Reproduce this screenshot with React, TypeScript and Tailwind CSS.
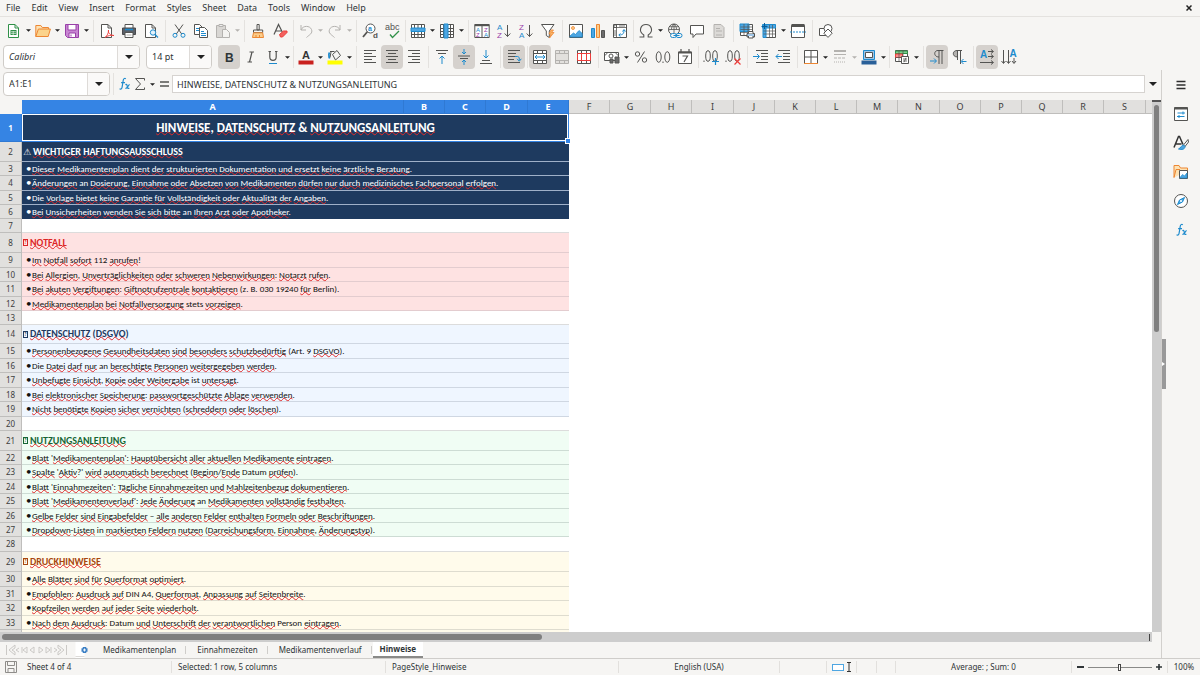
import type { ReactNode } from 'react';
import clsx from 'clsx';

const INK = '#545452';
const BLUE = '#1e8bcd';
const GREEN = '#309048';
const ORANGE = '#ed8733';
const PURPLE = '#9940a8';
const RED = '#ed3d3b';
const GREY = '#b4b2af';

function Svg({ children }: { children: ReactNode }) {
  return (
    <svg viewBox="0 0 16 16" className="h-4 w-4 overflow-visible" fill="none" stroke={INK} strokeWidth="1" aria-hidden="true">
      {children}
    </svg>
  );
}

function Letter({ x, y, size, fill, children, bold }: { x: number; y: number; size: number; fill: string; children: string; bold?: boolean }) {
  return (
    <text
      x={x}
      y={y}
      fontSize={size}
      fill={fill}
      stroke="none"
      fontWeight={bold ? 700 : 400}
      fontFamily='"Liberation Sans", sans-serif'
    >
      {children}
    </text>
  );
}

const gridLines = 'M1.5 5.5h13M1.5 8.5h13M1.5 11.5h13M4.5 1.5v13M8 1.5v13M11.5 1.5v13';

const icons: Record<string, ReactNode> = {
  new: (
    <>
      <path d="M2.5 1.5h6.5l3.5 3.5v9.5h-10z" stroke={GREEN} fill="#fff" />
      <path d="M9 1.5v3.5h3.5" stroke={GREEN} />
      <path d="M4.5 7h6v5h-6z" fill={GREEN} stroke="none" />
      <path d="M5 8.7h5M5 10.4h5M7.2 8v4" stroke="#fff" strokeWidth=".6" />
    </>
  ),
  open: (
    <>
      <path d="M.8 13.5v-11h5l1.5 2h6.2v2" stroke={ORANGE} fill="#fde2b4" />
      <path d="M.8 13.5l2.6-7.500h12l-2.200 7.500z" stroke={ORANGE} fill="#fbd38b" />
    </>
  ),
  save: (
    <>
      <path d="M1.5 1.5h13v13h-11l-2-2z" fill="#c885d2" stroke={PURPLE} />
      <path d="M4 1.5h8v5.5h-8z" fill="#fff" stroke={PURPLE} />
      <path d="M5 10h6.5v4.5h-6.5z" fill="#fff" stroke={PURPLE} />
      <path d="M7 11.5v2" stroke={PURPLE} />
    </>
  ),
  pdf: (
    <>
      <path d="M2.5 1.5h6.5l3.5 3.5v9.5h-10z" fill="#fff" />
      <path d="M9 1.5v3.5h3.5" />
      <path d="M6 14.5c2-1.5 4-5 3.5-7.5-.8 3 2 5.5 5.5 5.5-3-.5-6.500 0-9 2z" stroke={RED} fill="#fff" strokeWidth=".9" />
    </>
  ),
  print: (
    <>
      <path d="M4 5V1.5h8V5" fill="#fff" />
      <path d="M1.5 5h13v6.5h-13z" fill="#5b6068" stroke="#4a4a4d" />
      <path d="M4 6.5h8" stroke={BLUE} strokeWidth="1.5" />
      <path d="M4 9.5h8v5h-8z" fill="#fff" />
      <path d="M5.5 12h5" stroke={GREY} />
    </>
  ),
  preview: (
    <>
      <path d="M2.5 1.5h6.5l3.5 3.5v9.5h-10z" fill="#fff" />
      <path d="M9 1.5v3.5h3.5" />
      <circle cx="10" cy="9.5" r="2.7" stroke={BLUE} fill="#e4f2fb" />
      <path d="M12 11.5l3 3" stroke={BLUE} strokeWidth="1.3" />
    </>
  ),
  cut: (
    <>
      <path d="M4 1.5l6.7 9.5M12 1.5L5.3 11" />
      <circle cx="4" cy="12.3" r="2" stroke={BLUE} />
      <circle cx="12" cy="12.3" r="2" stroke={BLUE} />
    </>
  ),
  copy: (
    <>
      <path d="M1.5 1.5h5l3 3v7h-8z" fill="#fff" />
      <path d="M3 5.5h3M3 7.5h4" stroke={BLUE} />
      <path d="M6.5 4.5h5l3 3v7h-8z" fill="#fff" />
      <path d="M8 8.5h3M8 10.5h5M8 12.5h5" stroke={BLUE} />
    </>
  ),
  paste: (
    <>
      <path d="M1.5 2.5h9v12h-9z" fill="#d9d7d4" stroke={GREY} />
      <path d="M4 1.5h4v2h-4z" fill="#eee" stroke={GREY} />
      <path d="M7.5 6.5h4l3 3v5h-7z" fill="#f4f3f1" stroke={GREY} />
    </>
  ),
  brush: (
    <>
      <path d="M7 1.5h2.2v5.5h-2.2z" />
      <path d="M3.5 7h9.2v2.5h-9.2z" />
      <path d="M3.5 9.8l-1 4.700h11l-.8-4.700z" fill="#fbcd8a" stroke={ORANGE} />
      <path d="M6 12v2.5M9.5 12v2.5" stroke={ORANGE} />
    </>
  ),
  clear: (
    <>
      <path d="M2 11.5L6.5 1.5L10.3 9M3.5 8h6" strokeWidth="1.2" />
      <path d="M7.5 11.5l4-3.500h3.500v1.500l-4.500 4.500h-2z" fill="#f2625f" stroke={RED} />
    </>
  ),
  undo: <path d="M3 2v5h5M3 7c2-5 9-4.500 10.500-.5 1.500 4-2 5-5 8" stroke={GREY} />,
  redo: <path d="M13 2v5h-5M13 7c-2-5-9-4.500-10.500-.5-1.500 4 2 5 5 8" stroke={GREY} />,
  find: (
    <>
      <circle cx="8.5" cy="5.500" r="4.500" fill="#fff" />
      <path d="M5.300 8.800L1 14" strokeWidth="1.800" />
      <Letter x={6} y={8} size={7} fill={BLUE} bold>a</Letter>
      <Letter x={11} y={15} size={8} fill={INK} bold>d</Letter>
    </>
  ),
  spell: (
    <>
      <Letter x={1} y={7} size={9} fill={INK}>abc</Letter>
      <path d="M6 11.500l2.500 3 6.500-6.500" stroke={GREEN} strokeWidth="1.300" />
    </>
  ),
  rows: (
    <>
      <path d="M1.5 1.5h13v13h-13z" fill="#fff" />
      <path d={gridLines} />
      <path d="M1 5h14v3.500h-14z" fill="#4ea6e2" stroke={BLUE} />
    </>
  ),
  cols: (
    <>
      <path d="M1.5 1.5h13v13h-13z" fill="#fff" />
      <path d={gridLines} />
      <path d="M5 1h4v14h-4z" fill="#4ea6e2" stroke={BLUE} />
    </>
  ),
  sort: (
    <>
      <path d="M.8 1.500h14.400v13h-14.400z" fill="#fff" />
      <path d="M.8 2.200h14.400" strokeWidth="2" />
      <path d="M8 2v12.500" />
      <Letter x={2} y={8.500} size={6} fill={BLUE}>A</Letter>
      <Letter x={2} y={14} size={6} fill={PURPLE}>Z</Letter>
      <Letter x={10} y={8.500} size={6} fill={PURPLE}>Z</Letter>
      <Letter x={10} y={14} size={6} fill={BLUE}>A</Letter>
    </>
  ),
  az: (
    <>
      <Letter x={1} y={6.500} size={8} fill={BLUE}>A</Letter>
      <Letter x={1} y={15} size={8} fill={PURPLE}>Z</Letter>
      <path d="M11.500 2v11.500M8.700 10.500l2.800 3 2.800-3" />
    </>
  ),
  za: (
    <>
      <Letter x={1} y={6.500} size={8} fill={PURPLE}>Z</Letter>
      <Letter x={1} y={15} size={8} fill={BLUE}>A</Letter>
      <path d="M11.500 2v11.500M8.700 10.500l2.800 3 2.800-3" />
    </>
  ),
  filter: (
    <>
      <path d="M1.500 1.500h12.500l-4.700 6.500v6.500l-3-2v-4.500z" fill="#fff" />
      <path d="M11 7l-2 4h2l-1.500 4 4.500-5.500h-2.500l2-2.500z" fill="#fbb869" stroke={ORANGE} strokeWidth=".8" />
    </>
  ),
  image: (
    <>
      <path d="M1.500 1.500h13v13h-13z" fill="#fff" />
      <circle cx="5" cy="5" r="1.500" fill="#fbcd8a" stroke={ORANGE} strokeWidth=".8" />
      <path d="M2 13l3.500-3 2 1.500 3.500-4 3.200 3v3.500h-12.200z" fill="#4ea6e2" stroke={BLUE} strokeWidth=".8" />
    </>
  ),
  chart: (
    <>
      <path d="M1.500 5.500h3v9h-3z" fill="#4ea6e2" stroke={BLUE} />
      <path d="M6.500 1.500h3v13h-3z" fill="#fbcd8a" stroke={ORANGE} />
      <path d="M11.500 7.500h3v7h-3z" fill="#6b6b6b" />
    </>
  ),
  pivot: (
    <>
      <path d="M1.500 1.500h13v13h-13z" fill="#fff" />
      <path d="M1.500 4.500h13M4.500 1.500v13" strokeWidth=".8" />
      <path d="M2 2h2.500v2.500h-2.500zM7 3h6M3 7v6" strokeWidth=".8" />
      <path d="M7 12c4.500 0 5-2 5-5M10.500 8.500L12 6.500l1.500 2M8.500 10.500L6.800 12l1.700 1.700" stroke={BLUE} />
    </>
  ),
  omega: <path d="M1.500 14h4.300v-2c-6-4-3-10.500 2.200-10.500s8.200 6.500 2.200 10.500v2h4.300" strokeWidth="1.100" />,
  link: (
    <>
      <circle cx="7" cy="6.500" r="5.500" />
      <path d="M1.500 6.500h11M7 1v11M2.500 3.700h9M4.500 6.500c0-2 .7-4 2.500-5.500 1.800 1.500 2.500 3.500 2.500 5.500" strokeWidth=".8" />
      <rect x="3.500" y="10.500" width="6" height="4" rx="2" stroke={BLUE} fill="#f6f5f3" />
      <rect x="9" y="10.500" width="6" height="4" rx="2" stroke={BLUE} fill="#f6f5f3" />
      <path d="M6.500 12.500h6" stroke={BLUE} />
    </>
  ),
  comment: <path d="M1.500 2.500h13v8.500h-7.500l-3 3.500v-3.500h-2.500z" fill="#fff" />,
  header: (
    <>
      <path d="M3 1.500h7l3 3v10h-10z" fill="#dcdad7" stroke={GREY} />
      <path d="M5 5.500h4M5 8h6M5 12h6" stroke={GREY} />
    </>
  ),
  area: (
    <>
      <path d="M1.500 1.500h12v11h-12z" fill="#fff" />
      <path d="M1 1h9v7.500h-9z" fill="#4ea6e2" stroke={BLUE} />
      <path d="M1.500 4h12M1.500 6.500h12M1.500 9.500h12M5 1v12M9 1v12" strokeWidth=".7" />
      <path d="M8 10.500h7.500v3.500h-7.500z" fill="#9fc6e8" />
      <path d="M9.500 10.500v-2h4.500v2M9.500 13v2h4.500v-2" fill="#fff" />
    </>
  ),
  freeze: (
    <>
      <path d="M2.500 2.500h12v12h-12z" fill="#fff" />
      <path d="M1.500 1.500h13v3.500h-13zM2 2h3v12.500h-3z" fill="#4ea6e2" stroke={BLUE} />
      <path d="M2.500 8h12M2.500 11h12M8.500 2v12.500M11.500 2v12.500" strokeWidth=".7" />
      <path d="M3.500 0v6M.5 3.500h6" stroke="#0b5c96" />
    </>
  ),
  split: (
    <>
      <path d="M1.500 2.500h13v12h-13z" fill="#fff" />
      <path d="M1.500 2.500h13" strokeWidth="3" />
      <path d="M0 9h16" stroke={BLUE} strokeDasharray="2 1" />
    </>
  ),
  shapes: (
    <>
      <path d="M1.500 5.500h8v7h-8z" fill="#fff" />
      <circle cx="10" cy="5.500" r="4" fill="#fff" />
      <path d="M10 6l4.200 4.200-4.200 4.200-4.200-4.200z" fill="#fff" />
    </>
  ),
  bold: <Letter x={4} y={12.500} size={12} fill="#2e3436" bold>B</Letter>,
  italic: <path d="M6.500 3h4.500M4.500 13h4.500M9 3l-2.500 10" strokeWidth="1.200" />,
  underline: (
    <>
      <path d="M3.500 2.500h2.500M10 2.500h2.500M4.800 2.500v5.500c0 4.500 6.400 4.500 6.400 0v-5.500" strokeWidth="1.200" />
      <path d="M4 14.500h8" stroke={BLUE} />
    </>
  ),
  fontcolor: (
    <>
      <Letter x={4} y={9.500} size={11} fill="#333" bold>A</Letter>
      <path d="M.5 13.500h15" stroke="#c9211e" strokeWidth="4" />
    </>
  ),
  fill: (
    <>
      <path d="M4 3l-1 5.500M3 2.500h4.500M5.500 5.500l4.500-4 3.500 5-5 4.500z" fill="#f6f5f3" />
      <path d="M2.500 3.500c-1.500 2 0 4-.3 6" stroke={BLUE} strokeWidth="1.800" />
      <path d="M.5 13.500h15" stroke="#ffff00" strokeWidth="4" />
    </>
  ),
  left: <path d="M2 1.500h12M2 4.500h8M2 7.500h12M2 10.500h8M2 13.500h12" />,
  center: <path d="M2 1.500h12M4 4.500h8M2 7.500h12M4 10.500h8M2 13.500h12" />,
  right: <path d="M2 1.500h12M6 4.500h8M2 7.500h12M6 10.500h8M2 13.500h12" />,
  top: (
    <>
      <path d="M2 1.500h12M4 4.500h8" />
      <path d="M8 15V7M5.500 9.500L8 7l2.500 2.500" stroke={BLUE} />
    </>
  ),
  middle: (
    <>
      <path d="M2 7h12M4 9.500h8" />
      <path d="M8 0v5M6 3l2 2 2-2M8 16v-5M6 13l2-2 2 2" stroke={BLUE} />
    </>
  ),
  bottom: (
    <>
      <path d="M4 11.500h8M2 14.500h12" />
      <path d="M8 1v8M5.500 6.500L8 9l2.500-2.500" stroke={BLUE} />
    </>
  ),
  wrap: (
    <>
      <path d="M2 1.500h12M2 4.500h8M2 7.500h7M2 10.500h6M2 13.500h12" />
      <path d="M9 7.500h2.500c2 0 1.800 2 1.800 4M11 9.800l2.300 2.400 2-2.400" stroke={BLUE} />
    </>
  ),
  merge: (
    <>
      <path d="M1.500 1.500h13v13h-13z" fill="#fff" />
      <path d="M1.500 4.500h13M1.500 11.500h13M5.500 1.500v3M10.500 1.500v3M5.500 11.500v3M10.500 11.500v3" />
      <path d="M3 8h10M5 6L3 8l2 2M11 6l2 2-2 2" stroke={BLUE} />
    </>
  ),
  mergecells: (
    <>
      <path d="M1.500 1.500h13v13h-13z" fill="#e2e0dd" stroke={GREY} />
      <path d="M1.500 4.500h13M1.500 11.500h13M5.500 1.500v3M10.500 1.500v3M5.500 11.500v3M10.500 11.500v3" stroke={GREY} />
    </>
  ),
  unmerge: (
    <>
      <path d="M1.500 1.500h13v13h-13z" fill="#fff" />
      <path d="M5.500 1.500v3M10.500 1.500v3M5.500 11.500v3M10.500 11.500v3" />
      <path d="M1.500 4.500h13v7h-13zM5.500 4.500v7M10.500 4.500v7" stroke={RED} />
    </>
  ),
  currency: (
    <>
      <path d="M.5 3.500h14v8h-14z" fill="#fff" />
      <circle cx="7" cy="7" r="2" />
      <path d="M3 3.500c0 1.500-1 2.500-2.500 2.500M12 3.500c0 1.500 1 2.500 2.500 2.500" />
      <path d="M6 10h3v4h-3zM11 8h4v6h-4z" fill="#6b6b6b" />
    </>
  ),
  percent: (
    <>
      <circle cx="4.500" cy="5" r="2.200" />
      <circle cx="11.500" cy="11" r="2.200" />
      <path d="M11.500 2.500l-7 11" />
    </>
  ),
  number: (
    <>
      <ellipse cx="3.700" cy="8" rx="2.500" ry="5.300" />
      <ellipse cx="12.300" cy="8" rx="2.500" ry="5.300" />
      <path d="M8 12.500v1.500" />
    </>
  ),
  date: (
    <>
      <path d="M1.500 3h13v11.500h-13z" fill="#fff" />
      <path d="M1.500 3.500h13" strokeWidth="2" />
      <path d="M4 0v3M12 0v3M5.500 7h5l-3.500 6" strokeWidth="1.200" />
    </>
  ),
  adddec: (
    <>
      <ellipse cx="5" cy="7" rx="2.300" ry="5.300" />
      <ellipse cx="12" cy="7" rx="2.300" ry="5.300" />
      <path d="M1 11.500v1.500" />
      <path d="M12.500 9v7M9 12.500h7" stroke={BLUE} strokeWidth="1.200" />
    </>
  ),
  deldec: (
    <>
      <ellipse cx="5" cy="7" rx="2.300" ry="5.300" />
      <ellipse cx="12" cy="7" rx="2.300" ry="5.300" />
      <path d="M1 11.500v1.500" />
      <path d="M9.500 9.500l6 6M15.500 9.500l-6 6" stroke={RED} strokeWidth="1.200" />
    </>
  ),
  indent: (
    <>
      <path d="M3 1.500h12M8 4.500h7M8 7.500h7M8 10.500h7M3 13.500h12" />
      <path d="M0 7.500h6M4 5l2.500 2.500L4 10" stroke={BLUE} />
    </>
  ),
  outdent: (
    <>
      <path d="M3 1.500h12M8 4.500h7M8 7.500h7M8 10.500h7M3 13.500h12" />
      <path d="M1 7.500h6M3.500 5L1 7.500 3.500 10" stroke={BLUE} />
    </>
  ),
  borders: (
    <>
      <path d="M1.500 1.500h13v13h-13zM8 1.500v13M1.500 8h13" fill="#fff" />
      <path d="M1 14.500h14" stroke={ORANGE} />
    </>
  ),
  linestyle: (
    <>
      <path d="M2 2h12" strokeWidth="2" stroke={GREY} />
      <path d="M2 5.500h12" stroke={GREY} />
      <path d="M2 9h12" stroke={GREY} strokeDasharray="3 1" />
      <path d="M2 13h12" stroke={GREY} strokeDasharray="1 1" />
    </>
  ),
  bordercolor: (
    <>
      <path d="M2.500 1.500h11v9h-11z" fill="#9fc6e8" stroke={BLUE} />
      <path d="M4.500 3.500h7v5h-7z" fill="#fff" />
      <path d="M.5 13.500h15" stroke="#2a6099" strokeWidth="4" />
    </>
  ),
  conditional: (
    <>
      <path d="M1.500 1.500h12v11h-12z" fill="#fff" />
      <path d="M1.500 2h12v2.500h-12z" fill="#7ccf8e" stroke={GREEN} />
      <path d="M1.500 5h7v3.500h-7z" fill="#f58c8a" stroke={RED} />
      <path d="M5 1.500v11M9 1.500v11M1.500 8.500h8" strokeWidth=".7" />
      <path d="M7.500 7.500h7v7h-7z" fill="#fff" />
      <path d="M9 10h4M9 12h4M12 8.800l-2 4.400" strokeWidth=".8" />
    </>
  ),
  ltr: (
    <>
      <path d="M10 1v14M13 1v14M14.500 1.500H9c-4.500 0-4.500 6.500 1 6.500" />
      <path d="M1 12h6M5 9.500l2.500 2.500L5 14.500" stroke={BLUE} />
    </>
  ),
  rtl: (
    <>
      <path d="M6.500 1.500H6c-5 0-5 6.500.5 6.500z" fill="#b4b2af" />
      <path d="M6.500 1v10M9.500 1v14M11 1.500H6" />
      <path d="M15.500 12.500h-5M12.500 10L10 12.500l2.500 2.500" stroke={BLUE} />
    </>
  ),
  texth: (
    <>
      <Letter x={1} y={9} size={10} fill={BLUE} bold>A</Letter>
      <path d="M9 2.500h5M9 7.500h5M1 13.500h13M12 .5l2.500 2-2.500 2M12 5.500l2.500 2-2.500 2M12 11.500l2.500 2-2.500 2" />
    </>
  ),
  textv: (
    <>
      <Letter x={8.500} y={8} size={10} fill={BLUE} bold>A</Letter>
      <path d="M2.500 1v13M7.500 1v13M13 9v5M.5 12l2 2.500 2-2.500M5.500 12l2 2.500 2-2.500M11 12l2 2.500 2-2.500" />
    </>
  ),
  fx: (
    <g transform="translate(2 2) scale(.78)">
      <path d="M10 1c-1.500-1.200-3 0-3.300 2l-1.500 9c-.4 2-1.700 2.700-3.200 1.700M4 6h5" stroke={BLUE} strokeWidth="1.500" />
      <path d="M9.500 8.500c1.500-.8 2 0 2.200 1.500l.4 2c.3 1.500 1.200 1.700 2.400.8M15 8.500c-2 0-2.800 5.300-5.500 4.800" stroke={BLUE} strokeWidth="1.500" />
    </g>
  ),
  sum: <path d="M12.500 4.500V2.500H3.500L8.500 8l-5 5.500h9V11.500" />,
  equals: <path d="M4 6h9M4 10h9" strokeWidth="1.600" />,
  hamburger: <path d="M3.500 4.500h9M3.500 8h9M3.500 11.500h9" stroke="#2e2e2e" strokeWidth="1.300" />,
  properties: (
    <>
      <path d="M1.500 1.500h13v13h-13z" fill="#fff" />
      <path d="M1.500 2.500h13" strokeWidth="2" />
      <path d="M4.500 7h7.500M4 10.500h7.500M10 5.500v3M6 9v3" stroke={BLUE} />
    </>
  ),
  styles: (
    <>
      <path d="M1 12.500L5.500 1.500h1L10 9.500M3 9h5.500" strokeWidth="1.500" stroke="#333" />
      <path d="M15 4.500l-4.500 5.500 1.500 1.500L15.500 7z" fill="#fff" />
      <path d="M10.500 10c-2 0-2.500 3-5 4 3 1 6.500.5 6.500-2.500z" fill="#4ea6e2" stroke={BLUE} />
    </>
  ),
  gallery: (
    <>
      <path d="M1 13.500v-12h5l1.500 2.500h7v3M1 13.500l2-8h4" stroke={ORANGE} fill="#fde2b4" />
      <path d="M6.500 6.500h8v8h-8z" fill="#fff" />
      <path d="M7 13.500l2.500-3 2 1.500 2.500-3v5h-7z" fill="#4ea6e2" stroke={BLUE} strokeWidth=".7" />
    </>
  ),
  navigator: (
    <>
      <circle cx="8" cy="8" r="6.500" fill="#fff" />
      <path d="M11.500 4.500l-2 4.500-5 2.500 2-4.500z" fill="#4ea6e2" stroke={BLUE} />
      <circle cx="8" cy="8" r="1" fill="#fff" stroke="none" />
    </>
  ),
  disk: (
    <>
      <path d="M2.500 2.500h11v11h-11z" stroke="#8f8d8a" />
      <path d="M4.500 2.500h7v4h-7zM5 9.500h6v4h-6z" stroke="#8f8d8a" />
    </>
  ),
  addsheet: (
    <>
      <path d="M1.500 0h8l1 2v14h-9z" fill="#fff" stroke="none" />
      <path d="M1.500 14.500h9" stroke="#dddbd8" />
      <path d="M10.500 5v6M7.500 8h6" stroke="#3b7fc4" strokeWidth="3.500" />
      <path d="M10.500 6.500v3M9 8h3" stroke="#fff" strokeWidth=".9" />
    </>
  ),
};

type Tool = { icon: string; label: string; menu?: boolean; on?: boolean; off?: boolean };
type Item = Tool | 'gap' | 'wide';

const standardBar: Item[] = [
  { icon: 'new', label: 'New', menu: true },
  { icon: 'open', label: 'Open', menu: true },
  { icon: 'save', label: 'Save', menu: true },
  'wide',
  { icon: 'pdf', label: 'Export as PDF' },
  { icon: 'print', label: 'Print' },
  { icon: 'preview', label: 'Print Preview' },
  'wide',
  { icon: 'cut', label: 'Cut' },
  { icon: 'copy', label: 'Copy' },
  { icon: 'paste', label: 'Paste', menu: true, off: true },
  'wide',
  { icon: 'brush', label: 'Clone Formatting' },
  { icon: 'clear', label: 'Clear Formatting' },
  'gap',
  { icon: 'undo', label: 'Undo', menu: true, off: true },
  { icon: 'redo', label: 'Redo', menu: true, off: true },
  'wide',
  { icon: 'find', label: 'Find and Replace' },
  { icon: 'spell', label: 'Spelling' },
  'gap',
  { icon: 'rows', label: 'Row', menu: true },
  { icon: 'cols', label: 'Column', menu: true },
  'wide',
  { icon: 'sort', label: 'Sort' },
  { icon: 'az', label: 'Sort Ascending' },
  { icon: 'za', label: 'Sort Descending' },
  { icon: 'filter', label: 'AutoFilter' },
  'wide',
  { icon: 'image', label: 'Insert Image' },
  { icon: 'chart', label: 'Insert Chart' },
  { icon: 'pivot', label: 'Insert Pivot Table' },
  'gap',
  { icon: 'omega', label: 'Special Character', menu: true },
  { icon: 'link', label: 'Insert Hyperlink' },
  { icon: 'comment', label: 'Insert Comment' },
  { icon: 'header', label: 'Headers and Footers', off: true },
  'wide',
  { icon: 'area', label: 'Define Print Area' },
  { icon: 'freeze', label: 'Freeze Rows and Columns', menu: true },
  { icon: 'split', label: 'Split Window' },
  'wide',
  { icon: 'shapes', label: 'Show Draw Functions' },
];

const formatBar: Item[] = [
  { icon: 'bold', label: 'Bold', on: true },
  { icon: 'italic', label: 'Italic' },
  { icon: 'underline', label: 'Underline', menu: true },
  'gap',
  { icon: 'fontcolor', label: 'Font Color', menu: true },
  { icon: 'fill', label: 'Background Color', menu: true },
  'wide',
  { icon: 'left', label: 'Align Left' },
  { icon: 'center', label: 'Center Horizontally', on: true },
  { icon: 'right', label: 'Align Right' },
  'wide',
  { icon: 'top', label: 'Align Top' },
  { icon: 'middle', label: 'Center Vertically', on: true },
  { icon: 'bottom', label: 'Align Bottom' },
  'wide',
  { icon: 'wrap', label: 'Wrap Text', on: true },
  'gap',
  { icon: 'merge', label: 'Merge and Center', on: true },
  { icon: 'mergecells', label: 'Merge Cells', off: true },
  { icon: 'unmerge', label: 'Unmerge Cells' },
  'wide',
  { icon: 'currency', label: 'Format as Currency', menu: true },
  { icon: 'percent', label: 'Format as Percent' },
  { icon: 'number', label: 'Format as Number' },
  { icon: 'date', label: 'Format as Date' },
  'gap',
  { icon: 'adddec', label: 'Add Decimal Place' },
  { icon: 'deldec', label: 'Delete Decimal Place' },
  'wide',
  { icon: 'indent', label: 'Increase Indent' },
  { icon: 'outdent', label: 'Decrease Indent' },
  'wide',
  { icon: 'borders', label: 'Borders', menu: true },
  { icon: 'linestyle', label: 'Border Style', menu: true, off: true },
  { icon: 'bordercolor', label: 'Border Color', menu: true },
  'gap',
  { icon: 'conditional', label: 'Conditional', menu: true },
  'wide',
  { icon: 'ltr', label: 'Left-To-Right', on: true },
  { icon: 'rtl', label: 'Right-To-Left' },
  'wide',
  { icon: 'texth', label: 'Text direction from left to right', on: true },
  { icon: 'textv', label: 'Text direction from top to bottom' },
];

const menus = ['File', 'Edit', 'View', 'Insert', 'Format', 'Styles', 'Sheet', 'Data', 'Tools', 'Window', 'Help'];

function Caret({ big, off }: { big?: boolean; off?: boolean }) {
  return (
    <svg viewBox="0 0 8 4" className={clsx('shrink-0', big ? 'h-1 w-2' : 'h-[3px] w-[5px]')} aria-hidden="true">
      <path d="M0 0h8L4 4z" fill={off ? '#b4b2af' : '#222'} />
    </svg>
  );
}

function ToolItem({ item }: { item: Item }) {
  if (typeof item === 'string') {
    return (
      <span className={clsx('flex h-[22px] shrink-0 justify-center', item === 'wide' ? 'w-[6px]' : 'w-1')}>
        <span className="w-px bg-[#e4e2df]" />
      </span>
    );
  }
  return (
    <>
      <button
        aria-label={item.label}
        disabled={item.off}
        className={clsx('flex h-6 w-[22px] shrink-0 items-center justify-center rounded', item.on && 'bg-[#d5d1cd]')}
      >
        <Svg>{icons[item.icon]}</Svg>
      </button>
      {item.menu && (
        <button aria-label={`${item.label} options`} className="flex h-6 w-[7px] shrink-0 items-center justify-center">
          <Caret off={item.off} />
        </button>
      )}
    </>
  );
}

function Combo({ label, value, className }: { label: string; value: string; className: string }) {
  return (
    <div className={clsx('flex h-6 shrink-0 overflow-hidden rounded border border-[#cfccc8] bg-white', className)}>
      <input
        aria-label={label}
        defaultValue={value}
        className={clsx('w-0 min-w-0 flex-1 bg-transparent px-[5px] outline-none', label === 'Font Name' && 'italic')}
      />
      <button aria-label={`${label} list`} className="flex w-[22px] items-center justify-center border-l border-[#dedbd8] bg-[#faf9f8]">
        <Caret big />
      </button>
    </div>
  );
}

const extraColumns = 'BCDEFGHIJKLMNOPQRS'.split('');

type Tone = 'navy' | 'red' | 'blue' | 'green' | 'yellow' | 'blank';
type Row = { text?: string; tone: Tone; kind: 'title' | 'heading' | 'line' };

const block = (tone: Tone, heading: string, lines: string[], after: Tone = 'blank'): Row[] => [
  { text: heading, tone, kind: 'heading' },
  ...lines.map((text): Row => ({ text, tone, kind: 'line' })),
  { tone: after, kind: 'line' },
];

const rows: Row[] = [
  { text: 'HINWEISE, DATENSCHUTZ & NUTZUNGSANLEITUNG', tone: 'navy', kind: 'title' },
  ...block('navy', 'WICHTIGER HAFTUNGSAUSSCHLUSS', [
    'Dieser Medikamentenplan dient der strukturierten Dokumentation und ersetzt keine ärztliche Beratung.',
    'Änderungen an Dosierung, Einnahme oder Absetzen von Medikamenten dürfen nur durch medizinisches Fachpersonal erfolgen.',
    'Die Vorlage bietet keine Garantie für Vollständigkeit oder Aktualität der Angaben.',
    'Bei Unsicherheiten wenden Sie sich bitte an Ihren Arzt oder Apotheker.',
  ]),
  ...block('red', 'NOTFALL', [
    'Im Notfall sofort 112 anrufen!',
    'Bei Allergien, Unverträglichkeiten oder schweren Nebenwirkungen: Notarzt rufen.',
    'Bei akuten Vergiftungen: Giftnotrufzentrale kontaktieren (z. B. 030 19240 für Berlin).',
    'Medikamentenplan bei Notfallversorgung stets vorzeigen.',
  ]),
  ...block('blue', 'DATENSCHUTZ (DSGVO)', [
    'Personenbezogene Gesundheitsdaten sind besonders schutzbedürftig (Art. 9 DSGVO).',
    'Die Datei darf nur an berechtigte Personen weitergegeben werden.',
    'Unbefugte Einsicht, Kopie oder Weitergabe ist untersagt.',
    'Bei elektronischer Speicherung: passwortgeschützte Ablage verwenden.',
    'Nicht benötigte Kopien sicher vernichten (schreddern oder löschen).',
  ]),
  ...block('green', 'NUTZUNGSANLEITUNG', [
    "Blatt 'Medikamentenplan': Hauptübersicht aller aktuellen Medikamente eintragen.",
    "Spalte 'Aktiv?' wird automatisch berechnet (Beginn/Ende Datum prüfen).",
    "Blatt 'Einnahmezeiten': Tägliche Einnahmezeiten und Mahlzeitenbezug dokumentieren.",
    "Blatt 'Medikamentenverlauf': Jede Änderung an Medikamenten vollständig festhalten.",
    'Gelbe Felder sind Eingabefelder – alle anderen Felder enthalten Formeln oder Beschriftungen.',
    'Dropdown-Listen in markierten Feldern nutzen (Darreichungsform, Einnahme, Änderungstyp).',
  ]),
  ...block(
    'yellow',
    'DRUCKHINWEISE',
    [
      'Alle Blätter sind für Querformat optimiert.',
      'Empfohlen: Ausdruck auf DIN A4, Querformat, Anpassung auf Seitenbreite.',
      'Kopfzeilen werden auf jeder Seite wiederholt.',
      'Nach dem Ausdruck: Datum und Unterschrift der verantwortlichen Person eintragen.',
    ],
    'yellow',
  ),
];

const tallRows = new Set([4, 9, 11, 15, 17, 19, 23, 25, 28, 30, 32]);

const toneStyles: Record<Tone, string> = {
  navy: 'border-[#9fb0c8] bg-[#1e3a5f] text-white',
  red: 'border-[#e3cccf] bg-[#fee2e2]',
  blue: 'border-[#cfd7e2] bg-[#eff6ff]',
  green: 'border-[#cddcd4] bg-[#f0fdf4]',
  yellow: 'border-[#dedccf] bg-[#fffbeb]',
  blank: 'border-[#dcdcdc] bg-white',
};

const headingColor: Record<Tone, string> = {
  navy: 'text-white',
  red: 'text-[#dc2626]',
  blue: 'text-[#1e3a5f]',
  green: 'text-[#166534]',
  yellow: 'text-[#a8470f]',
  blank: '',
};

const knownWords = new Set(['Die', 'an', 'in', 'Person', 'Datum', 'Art', 'Berlin', 'stets', 'DIN', 'A', 'B', 'z', 'ist']);

function SpellChecked({ text }: { text: string }) {
  return (
    <>
      {text.split(/(\p{L}+)/u).map((part, i) =>
        i % 2 === 1 && !knownWords.has(part) ? (
          <span key={i} className="underline decoration-[#e02a2a] decoration-wavy decoration-1 underline-offset-[-1px] [text-decoration-skip-ink:none]">
            {part}
          </span>
        ) : (
          part
        ),
      )}
    </>
  );
}

function CellContent({ row }: { row: Row }) {
  if (!row.text) return null;
  if (row.kind === 'title') {
    return (
      <div className="text-center text-[13px] leading-4 font-bold">
        <SpellChecked text={row.text} />
      </div>
    );
  }
  if (row.kind === 'heading') {
    return (
      <div className={clsx('flex items-center gap-[2px] pl-px text-[10px] leading-3 font-bold', headingColor[row.tone])}>
        {row.tone === 'navy' ? (
          <span className="font-['DejaVu_Sans'] text-[9px] font-normal">⚠</span>
        ) : (
          <span className="flex h-[7px] w-[5px] items-center justify-center border border-current text-[5px] leading-none">?</span>
        )}
        <span>
          <SpellChecked text={row.text} />
        </span>
      </div>
    );
  }
  return (
    <div className="flex pl-1 text-[9px] leading-3">
      <span className="w-[6px] text-[11px]">•</span>
      <span>
        <SpellChecked text={row.text} />
      </span>
    </div>
  );
}

function rowHeight(row: Row, n: number) {
  if (row.kind === 'title') return 'h-7';
  if (row.kind === 'heading') return n === 14 ? 'h-[19px]' : 'h-5';
  return tallRows.has(n) ? 'h-[15px]' : 'h-[14px]';
}

function Sheet() {
  return (
    <table className="w-full table-fixed border-separate border-spacing-0">
      <colgroup>
        <col className="w-[22px]" />
        <col className="w-[382px]" />
        {extraColumns.map((c, i) => (
          <col key={c} className={i % 5 === 2 ? 'w-[42px]' : 'w-[41px]'} />
        ))}
        <col />
      </colgroup>
      <thead>
        <tr className="h-[14px] text-[9px] leading-3">
          <td className="bg-[#f6f5f3] p-0" />
          {['A', ...extraColumns].map((c, i) => (
            <th
              key={c}
              scope="col"
              className={clsx(
                'border-r border-b p-0',
                i < 5 ? 'border-[#2f79d3] bg-[#3584e4] font-bold text-white' : 'border-[#bfbebc] bg-[#e1e0de] font-normal text-[#3d3d3d]',
              )}
            >
              {c}
            </th>
          ))}
          <td className="border-b border-[#bfbebc] bg-[#e1e0de] p-0" />
        </tr>
      </thead>
      <tbody className="font-[Carlito,Lato,sans-serif] text-[#111]">
        {rows.map((row, i) => {
          const n = i + 1;
          return (
            <tr key={n} className={rowHeight(row, n)}>
              <th
                scope="row"
                className={clsx(
                  "border-r border-b p-0 font-['Noto_Sans'] text-[8px] leading-3",
                  n === 1 ? 'border-[#2f79d3] bg-[#3584e4] font-bold text-white' : 'border-[#bfbebc] bg-[#e1e0de] font-normal text-[#3d3d3d]',
                )}
              >
                {n <= 33 ? n : ''}
              </th>
              <td
                colSpan={5}
                className={clsx(
                  'p-0 whitespace-nowrap',
                  toneStyles[row.tone],
                  n !== 1 && n !== 6 && 'border-b',
                  n === 1 && 'relative z-10',
                )}
              >
                <CellContent row={row} />
                {n === 1 && (
                  <span className="absolute inset-0 border-r border-b border-[#3584e4]">
                    <span className="absolute inset-0 border border-white" />
                    <span className="absolute -right-[2px] -bottom-[2px] h-1 w-1 bg-[#3584e4] outline outline-white" />
                  </span>
                )}
              </td>
              <td colSpan={extraColumns.length - 3} className="bg-white p-0" />
            </tr>
          );
        })}
      </tbody>
    </table>
  );
}

const sheetTabs = ['Medikamentenplan', 'Einnahmezeiten', 'Medikamentenverlauf', 'Hinweise'];

function SheetTabs() {
  return (
    <div className="flex h-4 shrink-0 items-stretch text-[8px]">
      <div className="flex w-[68px] items-center gap-px pl-[5px]">
        {['First sheet', 'Previous sheet', 'Next sheet', 'Last sheet'].map((label, i) => (
          <button key={label} aria-label={label} className="w-[15px]">
            <svg viewBox="0 0 15 12" className="h-3 w-full" fill="none" stroke="#cbc9c6" aria-hidden="true">
              {i === 0 && <path d="M1.500 1v10M10 1L4 6l6 5V8l-3-2 3-2zM14 4l-3 2 3 2" />}
              {i === 1 && <path d="M6 3v6L2 6zM13 3v6L9 6zM1 3v6" />}
              {i === 2 && <path d="M2 3v6l4-3zM9 3v6l4-3zM14 3v6" />}
              {i === 3 && <path d="M13.500 1v10M5 1l6 5-6 5V8l3-2-3-2zM1 4l3 2-3 2" />}
            </svg>
          </button>
        ))}
      </div>
      <button aria-label="Add sheet" className="flex w-[25px] items-center pl-[6px]">
        <Svg>{icons.addsheet}</Svg>
      </button>
      <div role="tablist" className="flex">
        {sheetTabs.map((t, i) => (
          <button
            key={t}
            role="tab"
            aria-selected={i === 3}
            className={clsx(
              'relative leading-3',
              i === 3 ? 'border-b-2 border-[#8a8a88] bg-white px-[7px] font-bold' : 'border-r border-[#f6f5f3] px-[10px]',
            )}
          >
            {t}
            {i < 3 && <span className="absolute top-1 right-0 h-2 w-px bg-[#cfcdca]" />}
          </button>
        ))}
      </div>
    </div>
  );
}

function StatusBar() {
  const cell = 'flex h-3 items-center border-l border-[#e2e0dd]';
  return (
    <footer className="grid h-[17px] shrink-0 grid-cols-[22px_149fr_214fr_233fr_161fr_47fr_30fr_20fr_19fr_176fr_96px_33px] items-center border-t border-[#cfcdca] text-[8px]">
      <span className="flex justify-center">
        <Svg>{icons.disk}</Svg>
      </span>
      <span className="pl-[5px]">Sheet 4 of 4</span>
      <span className={clsx(cell, 'pl-[6px]')}>Selected: 1 row, 5 columns</span>
      <span className={clsx(cell, 'pl-[6px]')}>PageStyle_Hinweise</span>
      <span className={clsx(cell, 'justify-center')}>English (USA)</span>
      <span className={cell} />
      <span className={clsx(cell, 'gap-[2px] pl-[5px]')}>
        <span className="h-[7px] w-3 border border-[#4ea6e2] bg-white" />
        <svg viewBox="0 0 6 12" className="h-3 w-[6px]" fill="none" stroke="#333" aria-hidden="true">
          <path d="M1 1.500h4M3 1.500v9M1 10.500h4" />
        </svg>
      </span>
      <span className={cell} />
      <span className={cell} />
      <span className={clsx(cell, 'justify-center')}>Average: ; Sum: 0</span>
      <span className={clsx(cell, 'gap-[3px] pl-[5px]')}>
        <button aria-label="Zoom out" className="flex h-3 w-2 items-center">
          <span className="h-[2px] w-[7px] bg-[#2e3436]" />
        </button>
        <input
          type="range"
          aria-label="Zoom"
          defaultValue={49}
          className="h-px w-16 appearance-none bg-[#8a8a88] [&::-webkit-slider-thumb]:h-[7px] [&::-webkit-slider-thumb]:w-[3px] [&::-webkit-slider-thumb]:appearance-none [&::-webkit-slider-thumb]:border [&::-webkit-slider-thumb]:border-[#444] [&::-webkit-slider-thumb]:bg-white"
        />
        <button aria-label="Zoom in" className="flex h-3 w-2 items-center justify-center">
          <svg viewBox="0 0 8 8" className="h-2 w-2" stroke="#2e3436" strokeWidth="1.600" aria-hidden="true">
            <path d="M1 4h6M4 1v6" />
          </svg>
        </button>
      </span>
      <span className={clsx(cell, 'justify-center')}>100%</span>
    </footer>
  );
}

const sidebarDecks = [
  ['hamburger', 'Sidebar Settings'],
  ['properties', 'Properties'],
  ['styles', 'Styles'],
  ['gallery', 'Gallery'],
  ['navigator', 'Navigator'],
  ['fx', 'Functions'],
];

export default function App() {
  return (
    <div className="flex h-screen flex-col overflow-hidden bg-[#f6f5f3] font-['Noto_Sans',sans-serif] text-[9px] text-[#2e3436]">
      <header className="flex h-[17px] shrink-0 items-center border-b border-[#e4e2df] pl-[6px]">
        <nav className="flex flex-1 gap-[11px]">
          {menus.map((m) => (
            <button key={m} className="leading-3">
              {m}
            </button>
          ))}
        </nav>
        <button aria-label="Close document" className="flex w-[22px] justify-center">
          <svg viewBox="0 0 6 6" className="h-[6px] w-[6px]" stroke="#222" strokeWidth="1.500" aria-hidden="true">
            <path d="M.5.5l5 5M5.500.5l-5 5" />
          </svg>
        </button>
      </header>

      <div role="toolbar" aria-label="Standard" className="flex h-[27px] shrink-0 items-center pl-[3px]">
        {standardBar.map((item, i) => (
          <ToolItem key={i} item={item} />
        ))}
      </div>
      <div role="toolbar" aria-label="Formatting" className="flex h-[26px] shrink-0 items-center pl-[3px]">
        <Combo label="Font Name" value="Calibri" className="mr-[6px] w-[137px]" />
        <Combo label="Font Size" value="14 pt" className="mr-[6px] w-[66px]" />
        {formatBar.map((item, i) => (
          <ToolItem key={i} item={item} />
        ))}
      </div>

      <div className="flex min-h-0 flex-1">
        <main className="flex min-w-0 flex-1 flex-col">
          <div className="flex h-[30px] shrink-0 items-center pb-[2px] pl-[3px]">
            <Combo label="Name Box" value="A1:E1" className="w-[107px]" />
            <span className="ml-[3px] h-[22px] w-px bg-[#e4e2df]" />
            <button aria-label="Function Wizard" className="ml-[2px] flex w-4 justify-center">
              <Svg>{icons.fx}</Svg>
            </button>
            <button aria-label="Select Function" className="flex w-4 justify-center">
              <Svg>{icons.sum}</Svg>
            </button>
            <button aria-label="Select Function options" className="flex w-2 justify-center">
              <Caret />
            </button>
            <button aria-label="Formula" className="flex w-4 justify-center">
              <Svg>{icons.equals}</Svg>
            </button>
            <input
              aria-label="Input line"
              defaultValue="HINWEISE, DATENSCHUTZ & NUTZUNGSANLEITUNG"
              className="h-[18px] min-w-0 flex-1 border border-[#d6d3d0] bg-white px-1 outline-none"
            />
            <button aria-label="Expand Formula Bar" className="flex w-4 justify-center">
              <Caret big />
            </button>
          </div>

          <div className="flex min-h-0 flex-1">
            <div className="min-w-0 flex-1 overflow-hidden bg-white">
              <Sheet />
            </div>
            <div className="w-[9px] shrink-0 border-t-2 border-[#555] bg-[#cdcdcd] px-[2px] pt-[3px]">
              <div className="h-[43%] rounded-full bg-[#7f7f7f]" />
            </div>
          </div>
          <div className="mr-[9px] flex h-[10px] shrink-0 items-center justify-between bg-[#cdcdcd] pr-[2px] pl-[2px]">
            <div className="h-[6px] w-[47%] rounded-full bg-[#7f7f7f]" />
            <span className="h-[7px] w-px bg-[#444]" />
          </div>
          <SheetTabs />
        </main>

        <aside className="relative w-[39px] shrink-0 border-l border-[#d2d0cd]">
          <div className="flex flex-col items-center">
            {sidebarDecks.map(([icon, label]) => (
              <button key={icon} aria-label={label} className="flex h-[29px] w-full items-center justify-center">
                <Svg>{icons[icon]}</Svg>
              </button>
            ))}
          </div>
          <button aria-label="Hide sidebar" className="absolute top-[269px] left-0 flex h-[50px] w-1 items-center bg-[#999]">
            <svg viewBox="0 0 4 4" className="h-1 w-1" fill="#fff" aria-hidden="true">
              <path d="M0 0l3 2-3 2z" />
            </svg>
          </button>
        </aside>
      </div>
      <StatusBar />
    </div>
  );
}
